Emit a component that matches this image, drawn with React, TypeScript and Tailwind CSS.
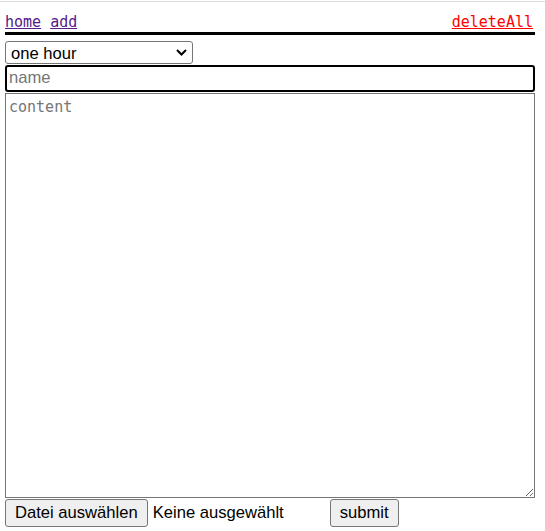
import React from "react";

const mono = { fontFamily: '"DejaVu Sans Mono", "Liberation Mono", monospace' };

const App = () => {
  return (
    <div className="w-[545px] h-[531px] bg-white" style={{ fontFamily: '"Liberation Sans", Arial, sans-serif' }}>
      <div className="h-px bg-white" />
      <div className="h-px bg-[#dcdcdc]" />
      <div className="px-[5px] w-[540px]">
        <nav className="flex justify-between pt-[11px] h-[30px] text-[15px] leading-[18px]" style={mono}>
          <div className="flex gap-[9px]">
            <a href="#" className="text-[#551a8b] underline">home</a>
            <a href="#" className="text-[#551a8b] underline">add</a>
          </div>
          <a href="#" className="text-[#ff0000] underline mr-[2px]">deleteAll</a>
        </nav>
        <div className="h-[3px] bg-black" />
        <div className="pt-[6px]">
          <div className="relative w-[188px] h-[23px]">
            <select className="block appearance-none w-[188px] h-[23px] border border-[#767676] rounded-[3px] text-[16.6px] text-black pl-[5px] bg-white">
              <option>one hour</option>
            </select>
            <svg className="absolute right-[6px] top-[8px] pointer-events-none" width="11" height="7" viewBox="0 0 11 7">
              <path d="M1 1 L5.5 5.5 L10 1" fill="none" stroke="black" strokeWidth="2" />
            </svg>
          </div>
        </div>
        <input
          placeholder="name"
          className="block w-[530px] h-[27px] mt-px border-2 border-black rounded-[3px] px-[2px] pb-px text-[16.6px] placeholder:text-[#757575] outline-none"
        />
        <textarea
          placeholder="content"
          className="block w-[530px] h-[405px] mt-px border border-[#767676] px-[3px] pt-[4px] pb-[2px] text-[15px] leading-[18px] placeholder:text-[#757575] outline-none"
          style={mono}
        />
        <div className="flex items-center mt-px h-[28px]">
          <button className="h-[28px] px-[9px] bg-[#efefef] border border-[#767676] rounded-[3px] text-[16.6px] text-black">
            Datei auswählen
          </button>
          <span className="ml-[5px] w-[177px] text-[16.6px] text-black">Keine ausgewählt</span>
          <button className="h-[28px] px-[9px] bg-[#efefef] border border-[#767676] rounded-[3px] text-[16.6px] text-black">
            submit
          </button>
        </div>
      </div>
    </div>
  );
};

export default App;
